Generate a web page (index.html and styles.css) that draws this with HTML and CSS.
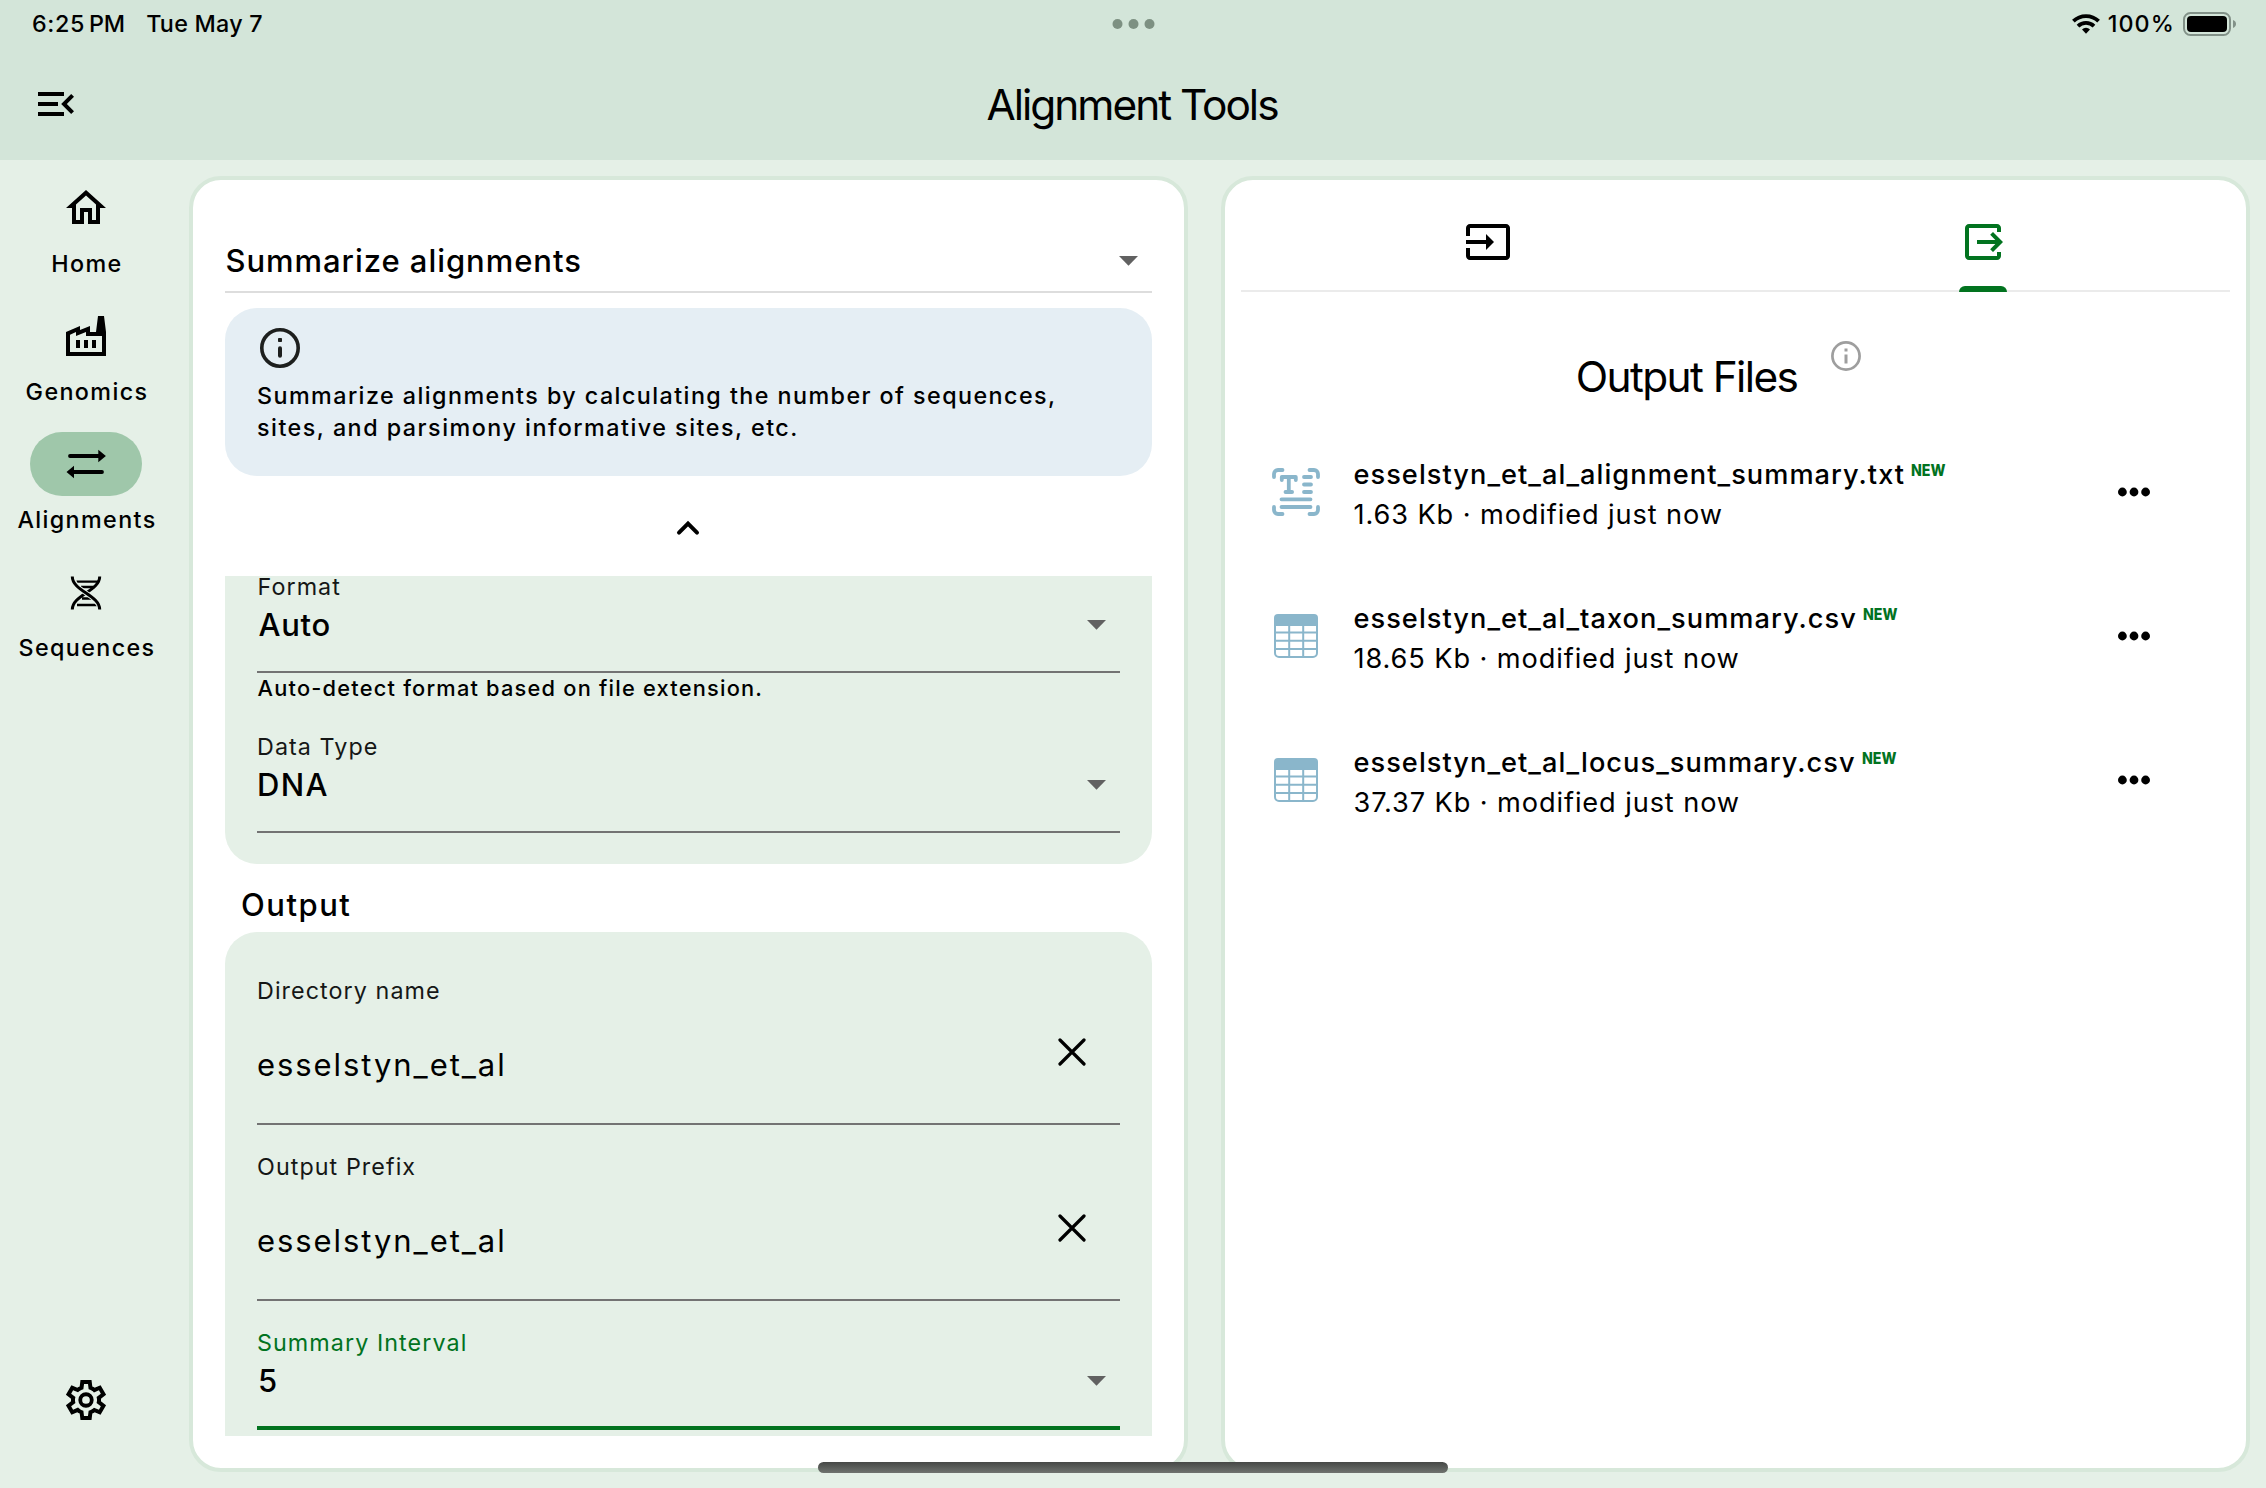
FILE: index.html
```
<!DOCTYPE html>
<html lang="en">
<head>
<meta charset="utf-8">
<title>Alignment Tools</title>
<link rel="stylesheet" href="styles.css">
</head>
<body>
<svg class="defs" aria-hidden="true">
  <symbol id="arrow-down" viewBox="0 0 19 10"><path d="M0 0h19L9.5 9.8z" fill="#616161"/></symbol>
  <symbol id="close" viewBox="0 0 28 28"><path d="M2 2l24 24M26 2L2 26" fill="none" stroke="#000" stroke-width="3.2" stroke-linecap="round"/></symbol>
  <symbol id="more" viewBox="0 0 34 10"><circle cx="5.4" cy="5" r="4.4"/><circle cx="17" cy="5" r="4.4"/><circle cx="28.6" cy="5" r="4.4"/></symbol>
  <symbol id="table" viewBox="0 0 48 48">
    <path d="M2 14V6a4 4 0 0 1 4-4h36a4 4 0 0 1 4 4v8z" fill="#8ab6cb"/>
    <path d="M3 12v29a4 4 0 0 0 4 4h34a4 4 0 0 0 4-4V12M3 20.4h42M3 28.8h42M3 37h42M17.2 12v33M31.2 12v33" fill="none" stroke="#8ab6cb" stroke-width="2"/>
  </symbol>
  <symbol id="text-scan" viewBox="0 0 48 48">
    <g fill="none" stroke="#8ab6cb" stroke-width="3.8" stroke-linecap="round" stroke-linejoin="round">
      <path d="M2 9V6a4 4 0 0 1 4-4h4.500M37.500 2H42a4 4 0 0 1 4 4v3M46 39v3a4 4 0 0 1-4 4h-4.500M10.500 46H6a4 4 0 0 1-4-4v-3"/>
      <path d="M9.500 39h29M9.500 31.300h29M36 24h3M36 16.500h3M36 9h3M32 24h7M32 16.500h7M32 9h7"/>
      <path d="M9.800 12V9h14v3M16.800 9v15M13.500 24h6.600"/>
    </g>
  </symbol>
</svg>

<header class="topbar">
  <div class="status">
    <div class="status-left"><span class="clock">6:25</span><span class="meridiem">PM</span><span class="date">Tue May 7</span></div>
    <div class="multitask"><i></i><i></i><i></i></div>
    <div class="status-right">
      <svg class="wifi" viewBox="0 0 28 20"><g fill="none" stroke="#000" stroke-width="3.800"><path d="M1.400 7.200a18 18 0 0 1 25.200 0"/><path d="M6 12.200a11.500 11.500 0 0 1 16 0"/></g><path d="M14 19.800l-4-4.300a5.700 5.700 0 0 1 8 0z"/></svg>
      <span class="percent">100%</span>
      <svg class="battery" viewBox="0 0 54 24"><rect x="1" y="1" width="46" height="22" rx="6.500" fill="none" stroke="#829188" stroke-width="2"/><rect x="4" y="4" width="40" height="16" rx="4"/><path d="M50 8c2 .8 3 2.200 3 4s-1 3.200-3 4z" fill="#829188"/></svg>
    </div>
  </div>
  <div class="titlebar">
    <svg class="icon48" viewBox="0 0 24 24"><path d="M3 18h13v-2H3v2zM3 6v2h13V6H3zm0 7h10v-2H3v2zm18 2.590L17.420 12 21 8.410 19.590 7l-5 5 5 5L21 15.590z"/></svg>
    <h1>Alignment Tools</h1>
  </div>
</header>

<div class="body">
  <nav class="rail">
    <a class="dest"><span class="pill"><svg class="icon48" viewBox="0 0 24 24"><path d="M12 5.690l5 4.500V18h-2v-6H9v6H7v-7.810l5-4.500M12 3L2 12h3v8h6v-6h2v6h6v-8h3L12 3z"/></svg></span><span class="label">Home</span></a>
    <a class="dest"><span class="pill"><svg class="icon48" viewBox="0 0 24 24"><path d="M22 22H2V10l7-3v2l5-2v3h3l1-8h3l1 8v12zM12 9.950l-5 2v-2L4 11.320V20h16v-8h-8V9.950zM11 18h2v-4h-2v4zm-4 0h2v-4H7v4zm10-4h-2v4h2v-4z"/></svg></span><span class="label">Genomics</span></a>
    <a class="dest active"><span class="pill"><svg class="icon48" viewBox="0 0 48 48"><path d="M8 16h30M40 32H10" fill="none" stroke="#000" stroke-width="3.800" stroke-linecap="round"/><path d="M36.300 9.700L43.900 16l-7.600 6.300zM12 25.700L4.500 32l7.500 6.300z"/></svg></span><span class="label">Alignments</span></a>
    <a class="dest"><span class="pill"><svg class="icon48" viewBox="0 0 48 48"><g fill="none" stroke="#000"><path d="M14.500 13.600h22M19 19h13.500M20 30.500h12M15 37h21" stroke-width="2.400"/><path d="M37.700 8.500C37.700 23 10.300 27 10.300 41.500" stroke-width="3"/><path d="M10.300 8.500C10.300 23 37.700 27 37.700 41.500" stroke="#e5f0e7" stroke-width="5"/><path d="M10.300 8.500C10.300 23 37.700 27 37.700 41.500" stroke-width="3"/></g></svg></span><span class="label">Sequences</span></a>
    <svg class="icon48 gear" viewBox="0 -960 960 960"><path fill-rule="evenodd" d="m370-80-16-128q-13-5-24.500-12T307-235l-119 50L78-375l103-78q-1-7-1-13.500v-27q0-6.500 1-13.500L78-585l110-190 119 50q11-8 23-15t24-12l16-128h220l16 128q13 5 24.500 12t22.500 15l119-50 110 190-103 78q1 7 1 13.500v27q0 6.500-2 13.500l103 78-110 190-118-50q-11 8-23 15t-24 12L590-80H370Zm70-80h79l14-106q31-8 57.500-23.500T639-327l99 41 39-68-86-65q5-14 7-29.500t2-31.500q0-16-2-31.500t-7-29.500l86-65-39-68-99 42q-22-23-48.500-38.500T533-694l-13-106h-79l-14 106q-31 8-57.500 23.500T321-633l-99-41-39 68 86 64q-5 15-7 30t-2 32q0 16 2 31t7 30l-86 65 39 68 99-42q22 23 48.500 38.500T427-266l13 106Z"/><circle cx="480" cy="-480" r="115" fill="none" stroke="#000" stroke-width="76"/></svg>
  </nav>

  <main class="panel tools">
    <div class="select"><span>Summarize alignments</span><svg class="arrow"><use href="#arrow-down"/></svg></div>
    <section class="info">
      <svg class="info-icon" viewBox="0 0 40 40"><circle cx="20" cy="20" r="18.200" fill="none" stroke="#1d1f1e" stroke-width="3.600"/><rect x="18" y="10" width="4" height="4" rx=".8" fill="#1d1f1e"/><path d="M20 20.200v7.600" stroke="#1d1f1e" stroke-width="4" stroke-linecap="round"/></svg>
      <p>Summarize alignments by calculating the number of sequences,<br><span class="line2">sites, and parsimony informative sites, etc.</span></p>
    </section>
    <div class="collapse"><svg viewBox="0 0 24 16"><path d="M3 12.700l9-9 9 9" fill="none" stroke="#000" stroke-width="4" stroke-linecap="round"/></svg></div>
    <div class="scroll">
      <section class="card first">
        <div class="field"><label class="format">Format</label><div class="choice"><span class="auto">Auto</span><svg class="arrow"><use href="#arrow-down"/></svg></div></div>
        <p class="help">Auto-detect format based on file extension.</p>
        <div class="field"><label>Data Type</label><div class="choice"><span>DNA</span><svg class="arrow"><use href="#arrow-down"/></svg></div></div>
      </section>
      <h2>Output</h2>
      <section class="card second">
        <div class="field"><label>Directory name</label><div class="input"><span>esselstyn_et_al</span><svg class="clear"><use href="#close"/></svg></div></div>
        <div class="field"><label>Output Prefix</label><div class="input"><span>esselstyn_et_al</span><svg class="clear"><use href="#close"/></svg></div></div>
        <div class="field focused"><label>Summary Interval</label><div class="choice"><span class="interval">5</span><svg class="arrow"><use href="#arrow-down"/></svg></div></div>
      </section>
    </div>
  </main>

  <aside class="panel files">
    <div class="tabs">
      <div class="tab"><svg class="icon48" viewBox="0 0 24 24"><path d="M21 3.010H3c-1.100 0-2 .9-2 2V9h2V4.990h18v14.030H3V15H1v4.010c0 1.100.9 1.980 2 1.980h18c1.100 0 2-.88 2-1.980v-14c0-1.110-.9-2-2-2zM11 16l4-4-4-4v3H1v2h10v3z"/></svg></div>
      <div class="tab selected"><svg class="icon48" viewBox="0 0 24 24"><path d="M17 17l5-5-5-5-1.410 1.410L18.170 11H9v2h9.170l-2.580 2.590zM19 19H5V5h14v2h2V5c0-1.100-.9-2-2-2H5c-1.100 0-2 .9-2 2v14c0 1.100.9 2 2 2h14c1.100 0 2-.9 2-2v-2h-2v2z"/></svg></div>
    </div>
    <div class="files-head">
      <h2>Output Files</h2>
      <span class="hint"><svg viewBox="0 0 30 30"><circle cx="15" cy="15" r="13.600" fill="none" stroke="#9e9e9e" stroke-width="2.700"/><rect x="13.500" y="7.500" width="3" height="3" fill="#9e9e9e"/><rect x="13.500" y="13.500" width="3" height="9" fill="#9e9e9e"/></svg></span>
    </div>
    <ul>
      <li><svg class="file-icon"><use href="#text-scan"/></svg>
        <div class="meta"><div class="name"><span>esselstyn_et_al_alignment_summary.txt</span><svg class="new" viewBox="0 0 35 12"><text x="0" y="12" textLength="34.500" lengthAdjust="spacingAndGlyphs">NEW</text></svg></div><div class="sub">1.63 Kb · modified just now</div></div>
        <svg class="more"><use href="#more"/></svg></li>
      <li><svg class="file-icon"><use href="#table"/></svg>
        <div class="meta"><div class="name"><span>esselstyn_et_al_taxon_summary.csv</span><svg class="new" viewBox="0 0 35 12"><text x="0" y="12" textLength="34.500" lengthAdjust="spacingAndGlyphs">NEW</text></svg></div><div class="sub">18.65 Kb · modified just now</div></div>
        <svg class="more"><use href="#more"/></svg></li>
      <li><svg class="file-icon"><use href="#table"/></svg>
        <div class="meta"><div class="name"><span>esselstyn_et_al_locus_summary.csv</span><svg class="new" viewBox="0 0 35 12"><text x="0" y="12" textLength="34.500" lengthAdjust="spacingAndGlyphs">NEW</text></svg></div><div class="sub">37.37 Kb · modified just now</div></div>
        <svg class="more"><use href="#more"/></svg></li>
    </ul>
  </aside>
</div>
<div class="home-indicator"></div>
</body>
</html>
```
FILE: styles.css
```
* { box-sizing: border-box; }
body {
  margin: 0;
  width: 2266px;
  height: 1488px;
  overflow: hidden;
  position: relative;
  display: flex;
  flex-direction: column;
  background: #e5f0e7;
  color: #000;
  font-family: Inter, "Noto Sans", sans-serif;
  font-weight: 500;
}
h1, h2, p, ul { margin: 0; padding: 0; }
svg { display: block; flex: none; overflow: visible; }
.defs { position: absolute; width: 0; height: 0; }
.icon48 { width: 48px; height: 48px; }

/* top bar */
.topbar { height: 160px; background: #d3e5d9; }
.status {
  height: 47px;
  display: grid;
  grid-template-columns: 1fr auto 1fr;
  align-items: center;
  padding: 0 29px 0 32px;
  font-size: 23.3px;
}
.status-left { display: flex; }
.clock { letter-spacing: 0.6px; }
.meridiem { margin-left: 4px; }
.date { margin-left: 21px; letter-spacing: 0.25px; }
.multitask { display: flex; gap: 6px; padding-top: 1px; transform: translateX(-1.5px); }
.multitask i { width: 10px; height: 10px; border-radius: 50%; background: #7d9082; }
.status-right { display: flex; align-items: center; justify-content: flex-end; }
.wifi { width: 28px; height: 20px; margin-right: 8px; }
.percent { letter-spacing: 1.1px; }
.battery { width: 54px; height: 24px; margin: 1px 0 0 8px; }
.titlebar {
  height: 113px;
  display: grid;
  grid-template-columns: 1fr auto 1fr;
  align-items: center;
  padding: 1px 32px 0;
}
h1, .files-head h2 { font-size: 42.4px; font-weight: 400; letter-spacing: -2px; line-height: 54px; }
h1 { padding-top: 2px; transform: translateX(-1px); }

/* navigation rail */
.body { flex: 1; min-height: 0; display: flex; padding: 16px 16px 16px 0; }
.rail { width: 189px; padding-right: 17px; display: flex; flex-direction: column; align-items: center; gap: 17px; }
.dest { display: flex; flex-direction: column; align-items: center; }
.pill { width: 112px; height: 64px; border-radius: 32px; display: grid; place-items: center; }
.active .pill { background: #9fc7aa; }
.label { font-size: 23.3px; line-height: 47px; letter-spacing: 1.38px; padding-left: 2px; }
.gear { margin: auto 0 48px; }

/* panels */
.panel { background: #fff; border: 4px solid #d7e8da; border-radius: 32px; }
.tools { width: 999px; padding: 32px 32px 0 31.5px; }
.files { flex: 1; margin-left: 33px; }

.arrow { width: 19px; height: 10px; margin-right: 14.5px; }
.select {
  height: 81px;
  padding-top: 18px;
  display: flex;
  align-items: center;
  justify-content: space-between;
  border-bottom: 2px solid #ddd;
  font-size: 31px;
  letter-spacing: 0.95px;
}
.select span { padding-left: 1px; }
.info {
  height: 168px;
  margin-top: 15px;
  padding: 20px 32.5px;
  border-radius: 32px;
  background: #e5eef4;
  font-size: 23.3px;
  line-height: 32px;
  letter-spacing: 1.44px;
}
.info p { margin-top: 12px; white-space: nowrap; }
.info-icon { width: 40px; height: 40px; margin-left: 3px; }
.line2 { letter-spacing: 1.5px; }
.collapse { height: 100px; display: grid; place-items: center; padding-top: 3px; }
.collapse svg { width: 24px; height: 16px; }

.scroll { height: 860px; overflow: hidden; }
.card { background: #e5f0e7; padding: 0 32px; }
.card.first { height: 288px; border-radius: 0 0 32px 32px; }
.card.second { height: 520px; padding-top: 48px; border-radius: 32px 32px 0 0; }
label {
  display: block;
  height: 21px;
  line-height: 21px;
  font-size: 23.3px;
  font-weight: 400;
  letter-spacing: 1.07px;
  padding-left: 0.5px;
  color: #151716;
}
.format { padding-left: 1px; }
.field { border-bottom: 2px solid #737373; }
.field + .field { margin-top: 31px; }
.choice, .input { display: flex; align-items: center; justify-content: space-between; font-size: 31px; }
.choice { height: 74px; padding: 0 0 19px 0.5px; letter-spacing: 1.3px; }
.auto { letter-spacing: 0.7px; padding-left: 1.5px; }
.interval { padding-left: 1px; }
.input { height: 122px; padding: 5px 0 0 0.5px; font-weight: 400; letter-spacing: 1.93px; }
.clear { width: 28px; height: 28px; margin: 0 34px 25px 0; }
.help { height: 30px; margin-bottom: 33px; padding-left: 1px; line-height: 30px; font-size: 21.8px; letter-spacing: 1.21px; }
.scroll h2 { height: 68px; padding: 13px 0 0 16.5px; line-height: 55px; font-size: 31px; font-weight: 500; letter-spacing: 1.5px; }
.focused { border-bottom: 4px solid #02731f; }
.focused label { color: #02731f; }
.focused .choice { height: 73px; padding-bottom: 18px; }

/* output files */
.tabs { height: 112px; margin: 0 16px; display: grid; grid-template-columns: 1fr 1fr; border-bottom: 2px solid #ebebeb; }
.tab { position: relative; display: flex; justify-content: center; padding-top: 38px; }
.selected { fill: #02731f; }
.selected::after {
  content: "";
  position: absolute;
  bottom: -2px;
  left: calc(50% - 24px);
  width: 48px;
  height: 6px;
  border-radius: 6px 6px 0 0;
  background: #02731f;
}
.files-head { height: 128px; display: flex; align-items: center; justify-content: center; }
.files-head h2 { padding-top: 42px; letter-spacing: -1.6px; transform: translateX(-1.5px); }
.hint { width: 95px; display: grid; place-items: center; }
.hint svg { width: 30px; height: 30px; }
ul { list-style: none; }
li { height: 144px; display: flex; align-items: center; padding: 0 95px 0 47px; }
.file-icon { width: 48px; height: 48px; }
.meta { flex: 1; padding-top: 6px; margin-left: 33.5px; font-size: 27.2px; line-height: 40px; }
.name { display: flex; letter-spacing: 1.04px; }
.new { width: 35px; height: 12px; margin: 9px 0 0 6px; }
.new text { font-size: 16.5px; font-weight: 800; letter-spacing: 0; fill: #02731f; }
.sub { font-weight: 400; letter-spacing: 0.89px; }
.more { width: 34px; height: 10px; }

.home-indicator {
  position: absolute;
  left: 818px;
  top: 1462px;
  width: 630px;
  height: 11px;
  border-radius: 5.5px;
  background: linear-gradient(#464846, #6f736f);
}
```
